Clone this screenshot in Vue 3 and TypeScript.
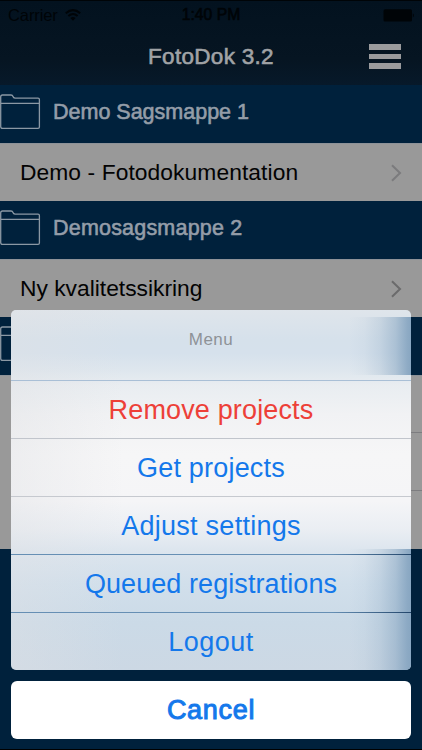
<script setup lang="ts">
interface Project { id: number; title: string; cls: string }
interface Folder { id: number; title: string; cls: string; projects: Project[] }
interface Action { label: string; cls: string }

const folders: Folder[] = [
  { id: 1, title: 'Demo Sagsmappe 1', cls: 'f1', projects: [{ id: 1, title: 'Demo - Fotodokumentation', cls: 'p1' }] },
  { id: 2, title: 'Demosagsmappe 2', cls: 'f2', projects: [{ id: 2, title: 'Ny kvalitetssikring', cls: 'p2' }] },
  { id: 3, title: '', cls: '', projects: [
    { id: 3, title: '', cls: '' }, { id: 4, title: '', cls: '' }, { id: 5, title: '', cls: '' },
  ] },
]

const actions: Action[] = [
  { label: 'Remove projects', cls: 'remove' },
  { label: 'Get projects', cls: 'get' },
  { label: 'Adjust settings', cls: 'adjust' },
  { label: 'Queued registrations', cls: 'queued' },
  { label: 'Logout', cls: 'logout' },
]
</script>

<template>
  <div class="screen">
    <header class="header">
      <div class="status">
        <div class="carrier">
          <span>Carrier</span>
          <svg width="16" height="12" viewBox="0 0 16 12">
            <path d="M.8 4.3Q8-2 15.2 4.3M3.4 7Q8 3 12.6 7" fill="none" stroke="#000407" stroke-width="2" />
            <path d="M5.4 9Q8 6.8 10.6 9L8 11.7Z" fill="#000407" />
          </svg>
        </div>
        <span class="clock">1:40 PM</span>
        <svg class="battery" width="32" height="13" viewBox="0 0 32 13">
          <rect x="0.5" y="0.3" width="28.5" height="12.2" rx="1.6" />
          <path d="M29.8 4.2Q32 6.4 29.8 8.6Z" />
        </svg>
      </div>
      <div class="nav">
        <span />
        <h1>FotoDok 3.2</h1>
        <div class="burger"><i /><i /><i /></div>
      </div>
    </header>
    <main>
      <section v-for="folder in folders" :key="folder.id">
        <div class="folder">
          <svg width="41" height="38" viewBox="0 0 41 38">
            <path d="M.7 33.5V4Q.7 2 2.5 2H11Q12.5 2 13 3.5T15 5.2H38Q39.4 5.2 39.4 6.6V34Q39.4 35.4 38 35.4H2.6Q.7 35.4.7 33.5ZM1 10.3H39" fill="none" stroke="#8b98a4" stroke-width="1.3" />
          </svg>
          <h2 :class="folder.cls">{{ folder.title }}</h2>
        </div>
        <div v-for="project in folder.projects" :key="project.id" class="project">
          <span :class="project.cls">{{ project.title }}</span>
          <svg width="13" height="20" viewBox="0 0 13 20">
            <path d="M2 2.2L10 10L2 17.8" fill="none" :stroke="project.id === 2 ? '#6b6b6c' : '#7b7b7d'" stroke-width="2" />
          </svg>
        </div>
      </section>
    </main>

    <div class="overlay">
      <div class="sheet">
        <div class="glow top" />
        <div class="glow bottom" />
        <div class="menu-title"><span>Menu</span></div>
        <button v-for="action in actions" :key="action.cls" :class="action.cls"><span>{{ action.label }}</span></button>
      </div>
      <button class="cancel"><span>Cancel</span></button>
    </div>
  </div>
</template>

<style>
body { background: #00213c; }
</style>

<style scoped>
* { box-sizing: border-box; }
.screen { position: relative; width: 422px; height: 750px; overflow: hidden; background: #00213c; font-family: "Liberation Sans", Arial, sans-serif; border-bottom: 1px solid #000; }
h1, h2 { margin: 0; font-weight: 400; }
.header { height: 85px; background: linear-gradient(#03121f, #061522 70%, #07192a); border-top: 1px solid #000407; }
.status { display: grid; grid-template-columns: 1fr auto 1fr; height: 28px; align-items: center; padding: 0 8px; color: #000407; font-size: 16.5px; }
.carrier { display: flex; align-items: center; gap: 7px; }
.carrier span { letter-spacing: -.1px; }
.clock { font-size: 15.7px; -webkit-text-stroke: .6px #000407; }
.battery { justify-self: end; fill: #000407; margin-right: -1px; }
.nav { display: grid; grid-template-columns: 1fr auto 1fr; height: 56px; align-items: center; padding: 0 21px 0; }
.nav h1 { font-size: 22.5px; line-height: 26px; letter-spacing: .3px; color: #a0a3a6; -webkit-text-stroke: .6px #a0a3a6; }
.burger { justify-self: end; display: flex; flex-direction: column; gap: 4px; width: 32px; padding-bottom: 1px; }
.burger i { height: 5.5px; background: #9b9b9d; }
.folder { height: 58px; display: flex; align-items: flex-start; padding-top: 8px; gap: 12px; background: #00213c; }
.folder h2 { font-size: 21.5px; line-height: 26px; padding-top: 6px; color: #949da8; -webkit-text-stroke: .6px #949da8; white-space: nowrap; }
.f2 { letter-spacing: .2px; }
.project { height: 58px; display: flex; align-items: center; justify-content: space-between; padding: 0 19px 0 20px; background: #999; color: #030303; font-size: 22.8px; white-space: nowrap; box-shadow: inset 0 1px #8d9298; padding-top: 1px; }
.p1 { letter-spacing: .08px; }
.project + .project { box-shadow: inset 0 0 #999; }
.project:not(:last-child) { background: linear-gradient(#7d7d80, #7d7d80) 20px 57px / 402px 1px no-repeat #999; }
.overlay { position: absolute; left: 11px; top: 310px; width: 400px; display: flex; flex-direction: column; gap: 11px; }
.sheet { position: relative; height: 360px; border-radius: 5px; overflow: hidden; background: linear-gradient(#dfe5eb, #d6e1eb 8%, #d6e1ec 12%, #dfe7ee 17%, #e9edf1 21%, #f1f2f4 29%, #f6f6f7 40%, #f5f5f7 53%, #eaeef3 61%, #dce5ee 67%, #d1dfeb 76%, #cbdae7 87%, #ccd8e4); }
.sheet::before { content: ""; position: absolute; inset: 0; background: linear-gradient(90deg, rgba(224, 225, 228, .4), rgba(224, 225, 228, 0) 28%); }
.glow { position: absolute; right: 0; width: 62px; background: linear-gradient(90deg, rgba(129, 161, 190, 0), rgba(129, 161, 190, .06) 25%, rgba(129, 161, 190, .22) 50%, rgba(129, 161, 190, .5) 75%, rgba(129, 161, 190, .85) 94%, #88a6c1); }
.glow.top { top: 7px; height: 58px; }
.glow.bottom { top: 239px; height: 121px; }
.menu-title { position: relative; height: 70px; display: flex; align-items: center; justify-content: center; color: #8e9297; font-size: 17px; letter-spacing: .5px; padding-bottom: 10px; }
button { position: relative; display: flex; width: 100%; height: 58px; padding: 1px 0 0; align-items: center; justify-content: center; border: 0; border-top: 1px solid #c1c5cc; background: transparent; color: #1478eb; font: 27px "Liberation Sans", Arial, sans-serif; letter-spacing: .15px; }
.remove { color: #ed4038; border-top-color: #a9bfd6; }
.get { letter-spacing: .2px; }
.adjust { border-top-color: #c6c9cf; letter-spacing: .25px; }
.queued { letter-spacing: .08px; }
.logout { letter-spacing: .5px; }
.queued, .logout { border-image: linear-gradient(90deg, #668fb4 80%, #22456a) 1; border-width: 1px 0 0; }
.cancel { border: 0; border-radius: 6px; background: #fff; color: #1478eb; -webkit-text-stroke: 1px #1478eb; letter-spacing: .7px; }
</style>
